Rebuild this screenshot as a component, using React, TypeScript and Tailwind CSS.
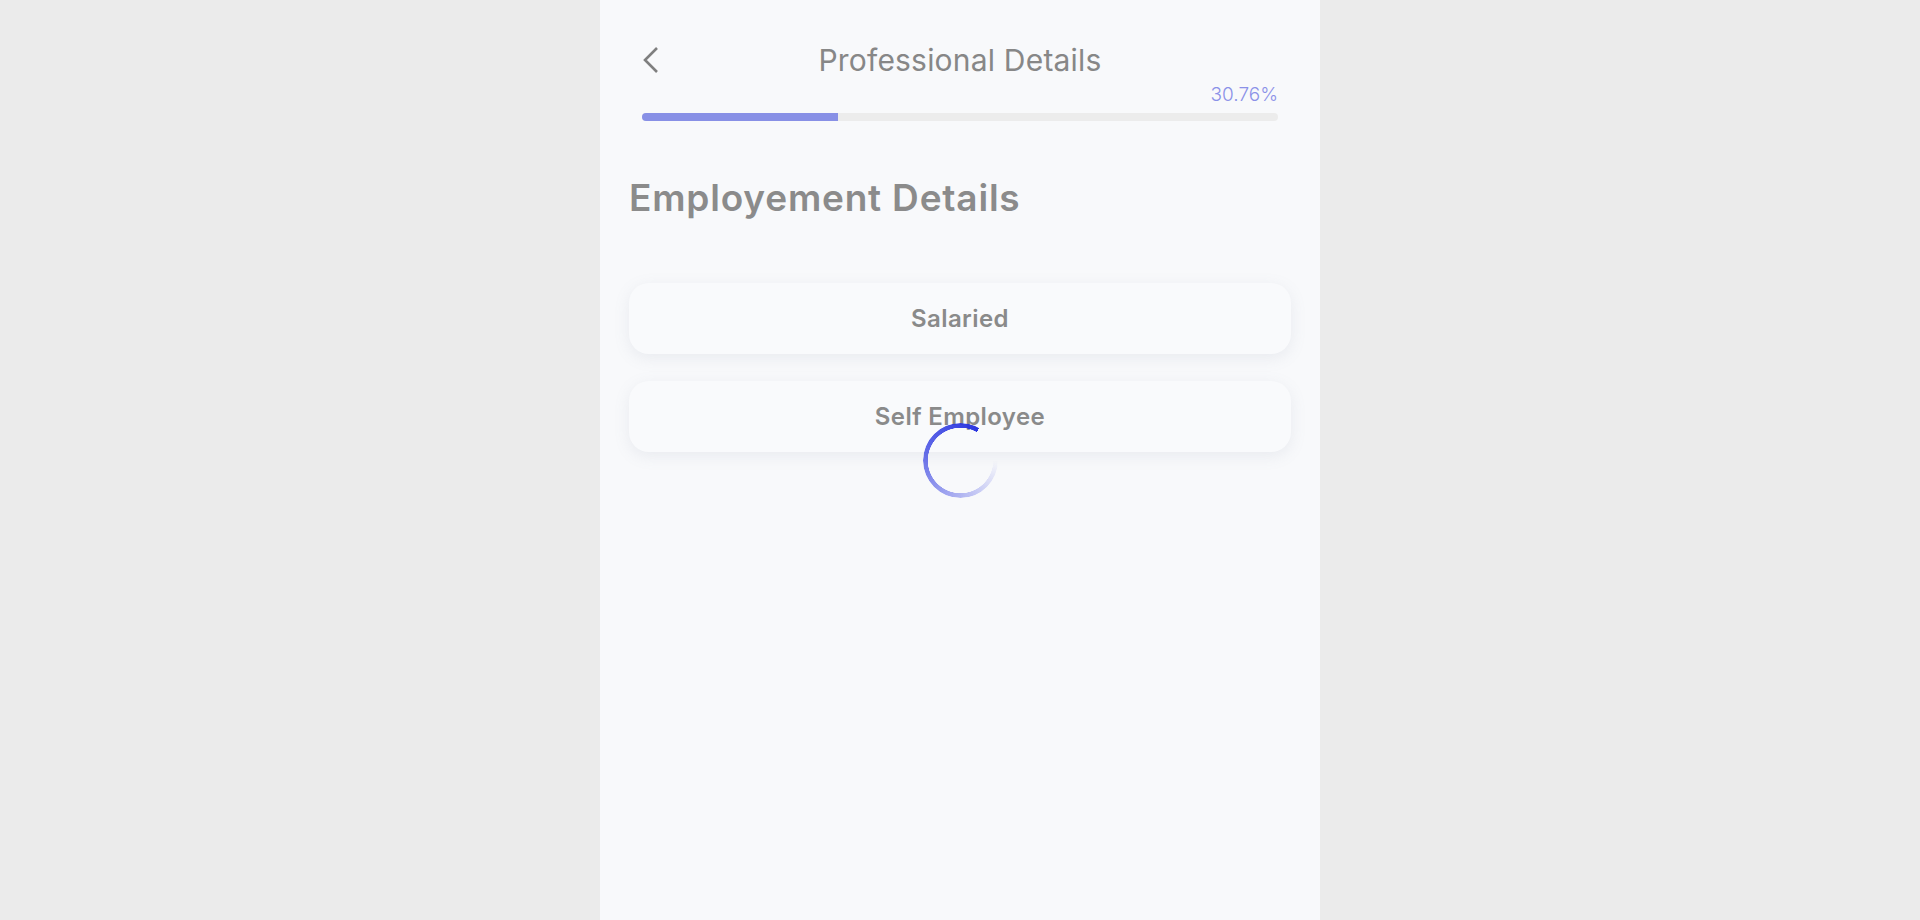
const options = ['Salaried', 'Self Employee']

function Spinner() {
  return (
    <div className="fixed inset-0 flex items-center justify-center pointer-events-none">
      <div className="w-[75px] h-[75px] rounded-full bg-[conic-gradient(from_90deg,rgba(43,54,224,0)_0deg,rgba(43,54,224,0.35)_90deg,rgba(43,54,224,0.75)_200deg,#2b36e0_300deg,transparent_300deg)] [mask:radial-gradient(farthest-side,transparent_calc(100%-5px),#000_calc(100%-4.5px))]" />
    </div>
  )
}

export default function App() {
  return (
    <div className="min-h-screen bg-[#ebebeb] flex justify-center font-['Inter',sans-serif]">
      <div className="w-[720px] min-h-screen bg-[#f8f9fb] px-[29px]">
        {/* header */}
        <div className="px-[13px] pt-[42px]">
          <div className="grid grid-cols-[40px_1fr_40px] items-center h-[36px]">
            <button className="flex items-center text-[#7f7f7f]">
              <svg width="18" height="28" viewBox="0 0 18 28" fill="none">
                <path d="M15 2 L3 14 L15 26" stroke="currentColor" strokeWidth="2.6" strokeLinejoin="miter" />
              </svg>
            </button>
            <h1 className="text-center text-[30px] leading-[36px] font-normal text-[#878787] tracking-[0.2px]">
              Professional Details
            </h1>
            <div />
          </div>
          <p className="mt-[5px] text-right text-[19px] leading-[24px] font-light text-[#8b91e8]">30.76%</p>
          <div className="mt-[6px] h-2 rounded-full bg-[#ececec] overflow-hidden">
            <div className="h-full w-[30.76%] bg-[#8890e6]" />
          </div>
        </div>

        <h2 className="mt-[55px] text-[37px] leading-[44px] font-semibold text-[#8b8b8b] tracking-[0.8px]">
          Employement Details
        </h2>

        <div className="mt-[63px] flex flex-col gap-[27px]">
          {options.map((o) => (
            <button
              key={o}
              className="h-[71px] w-full rounded-[20px] bg-[#f9fafc] shadow-[0_4px_16px_rgba(120,130,160,0.12)] flex items-center justify-center text-[24px] leading-[32px] font-semibold text-[#8a8a8a] tracking-[0.4px]"
            >
              {o}
            </button>
          ))}
        </div>
      </div>
      <Spinner />
    </div>
  )
}
